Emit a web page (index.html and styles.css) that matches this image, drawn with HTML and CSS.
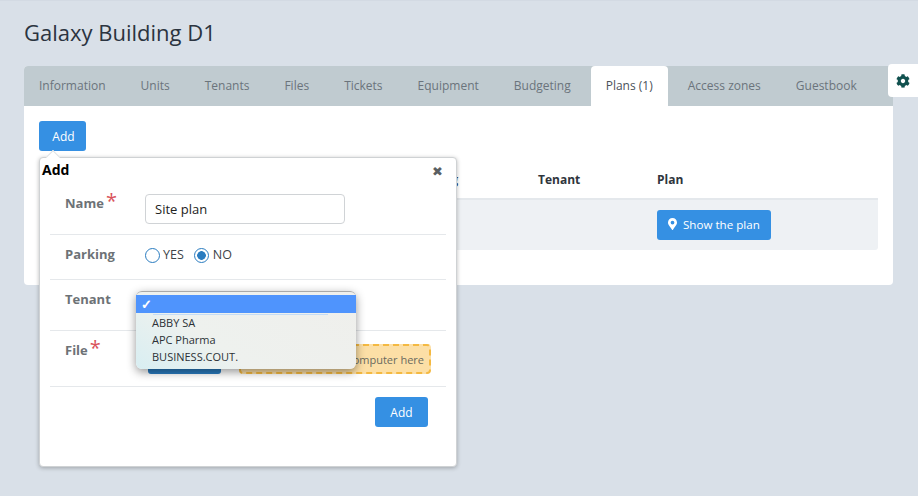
FILE: index.html
```html
<!DOCTYPE html>
<html lang="en">
<head>
<meta charset="utf-8">
<title>Galaxy Building D1</title>
<link rel="stylesheet" href="styles.css">
</head>
<body>
<main class="page">
  <h1 class="title">Galaxy Building D1</h1>
  <section class="card">
    <nav class="tabs">
      <a class="tab">Information</a>
      <a class="tab">Units</a>
      <a class="tab">Tenants</a>
      <a class="tab">Files</a>
      <a class="tab">Tickets</a>
      <a class="tab">Equipment</a>
      <a class="tab">Budgeting</a>
      <a class="tab tab-active">Plans (1)</a>
      <a class="tab">Access zones</a>
      <a class="tab">Guestbook</a>
    </nav>
    <div class="panel">
      <button class="btn btn-add">Add</button>
      <div class="table">
        <div class="thead">
          <span class="col-name">Name</span>
          <span class="col-parking">Parking</span>
          <span class="col-tenant">Tenant</span>
          <span class="col-plan">Plan</span>
        </div>
        <div class="tbody">
          <span class="col-name"></span>
          <span class="col-parking"></span>
          <span class="col-tenant"></span>
          <span class="col-plan">
            <button class="btn btn-plan">
              <svg class="pin" viewBox="0 0 384 512" aria-hidden="true"><path d="M172 502C27 291 0 265 0 192 0 86 86 0 192 0s192 86 192 192c0 73-27 99-172 310-10 14-30 14-40 0zm20-230a80 80 0 1 0 0-160 80 80 0 0 0 0 160z"/></svg>
              Show the plan
            </button>
          </span>
        </div>
      </div>

      <div class="popover">
        <span class="popover-arrow"></span>
        <div class="popover-head">
          <strong class="popover-title">Add</strong>
          <span class="popover-close">&#x2716;</span>
        </div>
        <form class="form">
          <div class="row row-name">
            <label class="label">Name<span class="req">*</span></label>
            <input class="input" type="text" value="Site plan">
          </div>
          <div class="row row-parking">
            <label class="label">Parking</label>
            <div class="radios">
              <span class="radio"></span><span class="radio-text">YES</span>
              <span class="radio radio-on"></span><span class="radio-text">NO</span>
            </div>
          </div>
          <div class="row row-tenant">
            <label class="label">Tenant</label>
            <div class="select-menu">
              <div class="opt opt-selected">&#x2713;</div>
              <div class="opt-line"></div>
              <div class="opt">ABBY SA</div>
              <div class="opt">APC Pharma</div>
              <div class="opt">BUSINESS.COUT.</div>
            </div>
          </div>
          <div class="row row-file">
            <label class="label">File<span class="req">*</span></label>
            <div class="file-controls">
              <button type="button" class="btn btn-browse">Browse</button>
              <div class="dropzone">Drop a file from your computer here</div>
            </div>
          </div>
          <div class="form-actions">
            <button type="button" class="btn btn-submit">Add</button>
          </div>
        </form>
      </div>
    </div>
  </section>
  <aside class="settings">
    <svg class="gear" viewBox="0 0 512 512" aria-hidden="true"><path d="M487.4 315.7l-42.6-24.6c4.3-23.2 4.3-47 0-70.2l42.6-24.6c4.9-2.8 7.1-8.6 5.5-14-11.1-35.6-30-67.8-54.7-94.6-3.8-4.1-10-5.1-14.8-2.3L380.8 110c-17.9-15.4-38.5-27.3-60.8-35.1V25.8c0-5.6-3.9-10.5-9.4-11.7-36.7-8.2-74.3-7.8-109.2 0-5.5 1.2-9.4 6.1-9.4 11.7V75c-22.2 7.9-42.8 19.8-60.8 35.1L88.7 85.5c-4.9-2.8-11-1.9-14.8 2.3-24.7 26.7-43.6 58.9-54.7 94.6-1.7 5.4.6 11.2 5.5 14L67.3 221c-4.3 23.2-4.3 47 0 70.2l-42.6 24.6c-4.9 2.8-7.1 8.6-5.5 14 11.1 35.6 30 67.8 54.7 94.6 3.8 4.1 10 5.1 14.8 2.3l42.6-24.6c17.9 15.4 38.5 27.3 60.8 35.1v49.2c0 5.6 3.9 10.5 9.4 11.7 36.7 8.2 74.3 7.8 109.2 0 5.5-1.2 9.4-6.1 9.4-11.7v-49.2c22.2-7.9 42.8-19.8 60.8-35.1l42.6 24.6c4.9 2.8 11 1.9 14.8-2.3 24.7-26.7 43.6-58.9 54.7-94.6 1.5-5.5-.7-11.3-5.6-14.1zM256 336c-44.1 0-80-35.9-80-80s35.9-80 80-80 80 35.9 80 80-35.9 80-80 80z"/></svg>
  </aside>
</main>
</body>
</html>
```

FILE: styles.css
```css
* { box-sizing: border-box; }
html, body { margin: 0; height: 100%; }
body {
  background: #d9e0e8;
  font-family: "Open Sans", "Noto Sans", sans-serif;
  font-size: 12px;
  color: #2b3138;
  overflow: hidden;
}
.page {
  position: relative;
  height: 496px;
  padding: 18px 25px 0 24px;
  border-top: 1px solid #d3dae3;
}
.title {
  margin: 0;
  height: 47px;
  font-size: 22px;
  line-height: 27px;
  font-weight: 400;
  color: #2b3440;
}
.card {
  background: #fff;
  border-radius: 4px;
  height: 219px;
}
.tabs {
  display: flex;
  gap: 5px;
  height: 40px;
  background: #c0cbd0;
  border-radius: 4px 4px 0 0;
}
.tab {
  padding: 0 15px;
  line-height: 40px;
  color: #6b747c;
  white-space: nowrap;
}
.tab-active {
  background: #fff;
  color: #4a525a;
  border-radius: 4px 4px 0 0;
}
.panel {
  position: relative;
  padding: 15px;
}
.btn {
  border: 0;
  border-radius: 3px;
  background: #3590e3;
  color: #fff;
  font-family: inherit;
  font-size: 12px;
  height: 30px;
  padding: 0;
}
.btn-add { display: block; width: 47px; padding-left: 2px; }
.table { margin-top: 10px; }
.thead, .tbody { display: flex; align-items: center; }
.thead {
  height: 39px;
  font-weight: 700;
  color: #2f353c;
  border-bottom: 2px solid #e4e8ec;
}
.tbody {
  height: 50px;
  background: #eef1f4;
  border-radius: 0 0 3px 3px;
}
.col-name { width: 250px; padding-left: 0; }
.col-parking { width: 249px; padding-left: 0; text-align: right; padding-right: 80px; }
.col-tenant { width: 119px; }
.col-plan { flex: 1; }
.btn-plan {
  display: flex;
  align-items: center;
  width: 114px;
  padding: 0 0 2px 11px;
  gap: 6px;
  font-size: 11.6px;
}
.pin { width: 9px; height: 12px; fill: #fff; }

.popover {
  position: absolute;
  left: 15px;
  top: 51px;
  width: 418px;
  height: 310px;
  background: #fff;
  border: 1px solid #cfd2d4;
  border-radius: 4px;
  box-shadow: 0 1px 4px rgba(0, 0, 0, .28);
}
.popover-arrow {
  position: absolute;
  left: 8px;
  top: -6px;
  width: 10px;
  height: 10px;
  background: #fff;
  border-top: 1px solid #dfe2e4;
  border-left: 1px solid #dfe2e4;
  transform: rotate(45deg);
}
.popover-head {
  position: relative;
  display: flex;
  justify-content: space-between;
  height: 26px;
  padding: 2px 13px 0 2px;
}
.popover-title {
  font-size: 14px;
  line-height: 20px;
  font-weight: 700;
  color: #000;
}
.popover-close {
  font-size: 13px;
  line-height: 22px;
  color: #5a5f63;
}
.form { margin: 0 10px; }
.row {
  position: relative;
  display: flex;
  border-bottom: 1px solid #e5e8eb;
}
.label {
  width: 95px;
  flex: none;
  padding-left: 15px;
  font-size: 13px;
  font-weight: 700;
  color: #6d7276;
  letter-spacing: 0;
}
.req {
  font-size: 20px;
  font-weight: 400;
  line-height: 10px;
  color: #d9535b;
  margin-left: 2px;
}
.row-name { height: 51px; padding-top: 10px; }
.row-name .label { line-height: 18px; }
.input {
  width: 200px;
  height: 30px;
  padding: 0 9px;
  border: 1px solid #d0d3d6;
  border-radius: 4px;
  font-family: inherit;
  font-size: 13px;
  color: #222;
  background: #fff;
}
.row-parking { height: 45px; align-items: center; padding-bottom: 4px; }
.row-parking .label { padding-bottom: 2px; }
.radios { display: flex; align-items: center; }
.radio {
  width: 15px;
  height: 15px;
  border: 1px solid #2a7cc0;
  border-radius: 50%;
  background: #fff;
  margin-right: 3px;
}
.radio-on {
  position: relative;
  margin-left: 10px;
  margin-right: 4px;
  background: radial-gradient(circle, #2a7cc0 0 4px, #fff 4.6px);
}
.radio-text { font-size: 12.5px; color: #3d4349; padding-bottom: 2px; }
.row-tenant { height: 51px; padding-top: 10px; }
.row-tenant .label { line-height: 18px; }
.select-menu {
  position: absolute;
  left: 86px;
  top: 11px;
  z-index: 2;
  width: 220px;
  height: 78px;
  padding-top: 3px;
  border-radius: 6px;
  background: linear-gradient(35deg, #d8eef2 0, #eef1ee 35%, #efefec 100%);
  box-shadow: 0 3px 10px rgba(0, 0, 0, .42);
  border-top: 1px solid #a9a9a9;
  font-size: 11px;
  color: #2c3136;
}
.opt {
  height: 17px;
  line-height: 17px;
  padding-left: 16px;
}
.opt-selected {
  height: 18px;
  line-height: 18px;
  padding-left: 5px;
  background: #4f94fd;
  color: #fff;
  font-size: 13px;
  font-weight: 700;
}
.opt-line {
  height: 1px;
  margin: 1px 28px -1px 17px;
  background: #c4dcf6;
}
.row-file { height: 56px; }
.row-file .label { padding-top: 10px; line-height: 18px; }
.file-controls {
  display: flex;
  gap: 18px;
  padding: 13px 0 0 3px;
}
.btn-browse { width: 73px; background: #2a7cc0; }
.dropzone {
  display: flex;
  align-items: center;
  justify-content: flex-end;
  width: 192px;
  height: 30px;
  padding-right: 5px;
  border: 2px dashed #f4b942;
  border-radius: 4px;
  background: #fcdfa6;
  color: #6a6a5e;
  font-size: 11px;
  white-space: nowrap;
  overflow: hidden;
}
.form-actions {
  display: flex;
  justify-content: flex-end;
  padding: 10px 18px 0 0;
}
.btn-submit { width: 53px; }
.settings {
  position: absolute;
  right: 0;
  top: 63px;
  display: flex;
  align-items: center;
  justify-content: center;
  width: 30px;
  height: 33px;
  background: #fff;
  border-radius: 4px 0 0 4px;
}
.gear { width: 14px; height: 14px; fill: #11514f; }
```
